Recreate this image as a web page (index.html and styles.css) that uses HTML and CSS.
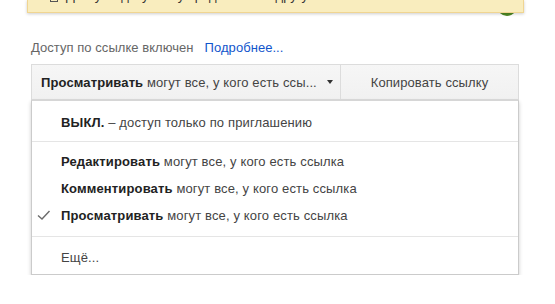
FILE: index.html
```html
<!DOCTYPE html>
<html lang="ru">
<head>
<meta charset="utf-8">
<title>Доступ по ссылке</title>
<link rel="stylesheet" href="styles.css">
</head>
<body>
<div class="top">
  <div class="avatar"></div>
  <div class="notice">
    <div class="notice-line"><span class="notice-icon"></span>Доступ к документу предоставлен другу</div>
  </div>
</div>
<div class="panel">
  <div class="status">Доступ по ссылке включен<a class="more" href="#">Подробнее...</a></div>
  <div class="actions">
    <div class="share-mode">
      <span class="mode-text"><b>Просматривать</b> могут все, у кого есть ссы...</span>
      <span class="caret"></span>
    </div>
    <div class="copy">Копировать ссылку</div>
  </div>
  <div class="menu">
    <div class="item"><b>ВЫКЛ.</b> – доступ только по приглашению</div>
    <div class="sep sep-a"></div>
    <div class="item"><b>Редактировать</b> могут все, у кого есть ссылка</div>
    <div class="item"><b>Комментировать</b> могут все, у кого есть ссылка</div>
    <div class="item checked">
      <svg class="check" width="14" height="12" viewBox="0 0 14 12"><path d="M1 6.5 L5 10 L12.5 2" fill="none" stroke="#6b6b6b" stroke-width="1.4"/></svg>
      <b>Просматривать</b> могут все, у кого есть ссылка
    </div>
    <div class="sep sep-b"></div>
    <div class="item last">Ещё...</div>
  </div>
</div>
</body>
</html>
```
FILE: styles.css
```css
html, body {
  margin: 0;
  padding: 0;
  background: #fff;
}
body {
  font-family: "Liberation Sans", Arial, sans-serif;
  font-size: 13px;
  color: #333;
}
.top {
  position: relative;
  height: 13px;
}
.avatar {
  position: absolute;
  left: 497px;
  top: -4px;
  width: 20px;
  height: 20px;
  border-radius: 50%;
  background: #4f8a24;
}
.notice {
  position: relative;
  margin-left: 27px;
  width: 495px;
  height: 12px;
  overflow: hidden;
  background: #f9edbe;
  border: 1px solid #f0d592;
  border-top: 0;
  box-shadow: 0 1px 3px rgba(0, 0, 0, 0.2);
}
.notice-line {
  margin-top: -12px;
  padding-left: 22px;
  line-height: 15px;
  color: #333;
  display: flex;
  align-items: flex-end;
  gap: 8px;
}
.notice-icon {
  display: inline-block;
  width: 6px;
  height: 8px;
  border: 1px solid #555;
  margin-bottom: 1px;
}
.panel {
  margin: 27px 0 0 31px;
  width: 488px;
}
.status {
  line-height: 15px;
  color: #666;
  letter-spacing: 0.05px;
}
.more {
  color: #1155cc;
  text-decoration: none;
  margin-left: 11px;
}
.actions {
  margin-top: 9px;
  display: flex;
  height: 34px;
  border: 1px solid #dcdcdc;
  background: linear-gradient(#f6f6f6, #f1f1f1);
  box-sizing: content-box;
}
.share-mode {
  width: 290px;
  padding: 0 9px;
  display: flex;
  align-items: center;
  justify-content: space-between;
  border-right: 1px solid #dcdcdc;
  color: #444;
  letter-spacing: 0.12px;
}
.share-mode b {
  color: #222;
}
.caret {
  width: 0;
  height: 0;
  border-left: 3.5px solid transparent;
  border-right: 3.5px solid transparent;
  border-top: 4px solid #333;
  margin-right: -2px;
}
.copy {
  flex: 1;
  display: flex;
  align-items: center;
  justify-content: center;
  color: #444;
  letter-spacing: 0.1px;
}
.menu {
  margin-top: 0;
  border: 1px solid rgba(0, 0, 0, 0.2);
  border-top-color: #d6d6d6;
  background: #fff;
  box-shadow: 0 2px 4px rgba(0, 0, 0, 0.2);
  padding: 8px 0 3px;
}
.item {
  position: relative;
  padding: 6px 0 6px 29px;
  line-height: 15px;
  color: #444;
  letter-spacing: 0.14px;
}
.item b {
  color: #222;
}
.check {
  position: absolute;
  left: 5px;
  top: 7px;
}
.sep {
  height: 1px;
  background: #e5e5e5;
}
.sep-a {
  margin: 5px 0 6px;
}
.sep-b {
  margin: 7px 0 7px;
}
```
